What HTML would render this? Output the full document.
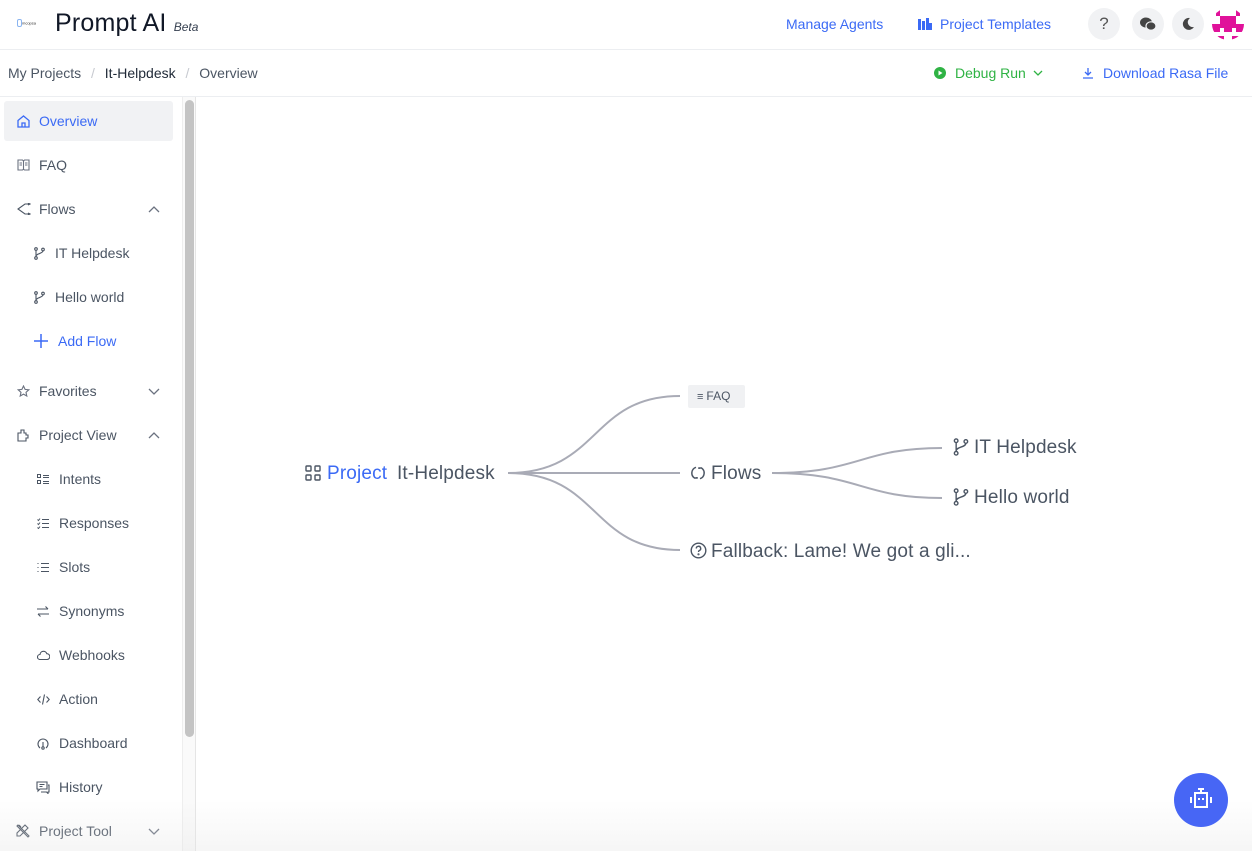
<!DOCTYPE html>
<html><head><meta charset="utf-8"><style>
*{box-sizing:border-box;margin:0;padding:0}
body{width:1252px;height:851px;overflow:hidden;background:#fff;font-family:"Liberation Sans",sans-serif;color:#4b5563;position:relative}
.hdr{position:absolute;left:0;top:0;width:1252px;height:50px;border-bottom:1px solid #eceef1}
.bc{position:absolute;left:0;top:50px;width:1252px;height:47px;border-bottom:1px solid #eceef1;font-size:14px}
.abs{position:absolute;white-space:nowrap}
.side{position:absolute;left:0;top:97px;width:182px;height:754px;font-size:14px}
.it{position:absolute;left:0;height:40px;display:flex;align-items:center;white-space:nowrap}
.it svg{flex:none}
.sb{position:absolute;left:182px;top:97px;width:14px;height:754px;border-left:1px solid #eee;border-right:1px solid #e5e5e5;background:#fafafa}
.thumb{position:absolute;left:185px;top:100px;width:9px;height:637px;background:#c4c4c4;border-radius:5px}
.circ{position:absolute;top:8px;width:32px;height:32px;border-radius:50%;background:#f1f2f4;display:flex;align-items:center;justify-content:center}
.fade{position:absolute;left:0;top:800px;width:1252px;height:51px;background:linear-gradient(rgba(255,255,255,0),rgba(228,228,228,.35))}
.mm{font-size:19px;letter-spacing:0.15px}
</style></head><body>
<div class="hdr">
 <div class="abs" style="left:17px;top:19px;width:22px;height:8px;font-size:5px;color:#4a7fe0"><span style="display:inline-block;width:5px;height:8px;border:1.5px solid #8ab4f0;border-radius:2px;vertical-align:middle"></span><span style="color:#333;font-size:4px">mcopsa</span></div>
 <div class="abs" style="left:55px;top:9px;font-size:25px;color:#111827;letter-spacing:0.2px">Prompt AI <i style="font-size:12px;color:#374151;letter-spacing:0">Beta</i></div>
 <div class="abs" style="left:786px;top:16px;font-size:14px;color:#3b6af5">Manage Agents</div>
 <svg class="abs" style="left:918px;top:17px" width="14" height="14" viewBox="0 0 14 14" fill="#3b6af5"><rect x="0" y="2" width="3" height="11"/><rect x="4" y="4" width="3" height="9"/><rect x="8" y="1" width="3" height="12"/><rect x="11" y="6" width="3" height="7"/></svg>
 <div class="abs" style="left:940px;top:16px;font-size:14px;color:#3b6af5">Project Templates</div>
 <div class="circ" style="left:1088px;font-size:17px;color:#555">?</div>
 <div class="circ" style="left:1132px"><svg width="16" height="14" viewBox="0 0 16 14" fill="#444"><ellipse cx="6" cy="5.5" rx="6" ry="5"/><ellipse cx="11" cy="9" rx="5" ry="4.2" stroke="#f1f2f4" stroke-width="1.2"/></svg></div>
 <div class="circ" style="left:1172px"><svg width="14" height="14" viewBox="0 0 14 14"><path d="M9 1a6 6 0 1 0 4 9a5 5 0 0 1-4-9z" fill="#444"/></svg></div>
 <svg class="abs" style="left:1212px;top:8px" width="32" height="32" viewBox="0 0 8 8"><clipPath id="c"><circle cx="4" cy="4" r="4"/></clipPath><g clip-path="url(#c)" fill="#e0129a"><rect x="0" y="0" width="8" height="8" fill="#fff"/><rect x="1" y="0" width="1" height="2"/><rect x="6" y="0" width="1" height="2"/><rect x="2" y="2" width="4" height="3"/><rect x="0" y="4" width="2" height="2"/><rect x="6" y="4" width="2" height="2"/><rect x="3" y="5" width="2" height="1"/><rect x="1" y="7" width="2" height="1"/><rect x="5" y="7" width="2" height="1"/></g></svg>
</div>
<div class="bc">
 <div class="abs" style="left:8px;top:15px;color:#4b5563">My Projects <span style="color:#c7cad0;margin:0 6px">/</span> <span style="color:#1f2937">It-Helpdesk</span> <span style="color:#c7cad0;margin:0 6px">/</span> Overview</div>
 <svg class="abs" style="left:934px;top:17px" width="12" height="12" viewBox="0 0 12 12"><circle cx="6" cy="6" r="6" fill="#2fb344"/><path d="M4.5 3.5v5l4-2.5z" fill="#fff"/></svg>
 <div class="abs" style="left:955px;top:15px;color:#2fb344">Debug Run</div>
 <svg class="abs" style="left:1033px;top:20px" width="10" height="6" viewBox="0 0 10 6"><path d="M1 1l4 4 4-4" stroke="#2fb344" stroke-width="1.3" fill="none"/></svg>
 <svg class="abs" style="left:1082px;top:17px" width="12" height="12" viewBox="0 0 12 12" stroke="#3b6af5" stroke-width="1.3" fill="none"><path d="M6 1v7M3 5l3 3 3-3M1 11h10"/></svg>
 <div class="abs" style="left:1103px;top:15px;color:#3b6af5">Download Rasa File</div>
</div>
<div class="side">
 <div class="abs" style="left:4px;top:4px;width:169px;height:40px;background:#f1f2f4;border-radius:3px"></div>
 <div class="it" style="top:4px;left:17px;color:#3b6af5"><svg width="13" height="13" viewBox="0 0 13 13" fill="none" stroke="#3b6af5" stroke-width="1.3"><path d="M1 5.5L6.5 1 12 5.5V12H1z M5 12V8h3v4"/></svg><span style="margin-left:9px">Overview</span></div>
 <div class="it" style="top:48px;left:17px"><svg width="13" height="12" viewBox="0 0 13 12" fill="none" stroke="#6b7280" stroke-width="1.1"><path d="M1 1h4.5l1 1 1-1H12v10H7.5l-1-.8-1 .8H1zM6.5 2v9M2.5 4h2.5M2.5 6h2.5M8 4h2.5M8 6h2.5"/></svg><span style="margin-left:9px">FAQ</span></div>
 <div class="it" style="top:92px;left:17px;width:143px"><svg width="14" height="12" viewBox="0 0 14 12" fill="none" stroke="#4b5563" stroke-width="1.1"><path d="M13 1H8L1 6l7 5h5M11 0l2 1-2 1M11 10l2 1-2 1"/></svg><span style="margin-left:8px">Flows</span><svg style="margin-left:auto" width="12" height="7" viewBox="0 0 12 7"><path d="M1 6l5-5 5 5" stroke="#6b7280" stroke-width="1.3" fill="none"/></svg></div>
 <div class="it" style="top:136px;left:34px"><svg width="11" height="13" viewBox="0 0 11 13" fill="none" stroke="#4b5563" stroke-width="1.1"><circle cx="2" cy="2" r="1.3"/><circle cx="2" cy="11" r="1.3"/><circle cx="9" cy="2.5" r="1.3"/><path d="M2 3.3v6.4M9 3.8c0 3-7 2.5-7 5.5"/></svg><span style="margin-left:10px">IT Helpdesk</span></div>
 <div class="it" style="top:180px;left:34px"><svg width="11" height="13" viewBox="0 0 11 13" fill="none" stroke="#4b5563" stroke-width="1.1"><circle cx="2" cy="2" r="1.3"/><circle cx="2" cy="11" r="1.3"/><circle cx="9" cy="2.5" r="1.3"/><path d="M2 3.3v6.4M9 3.8c0 3-7 2.5-7 5.5"/></svg><span style="margin-left:10px">Hello world</span></div>
 <div class="it" style="top:224px;left:34px;color:#3b6af5"><svg width="14" height="14" viewBox="0 0 14 14" stroke="#3b6af5" stroke-width="1.5"><path d="M7 0v14M0 7h14"/></svg><span style="margin-left:10px">Add Flow</span></div>
 <div class="it" style="top:274px;left:17px;width:143px"><svg width="13" height="13" viewBox="0 0 13 13" fill="none" stroke="#6b7280" stroke-width="1.1"><path d="M6.5 1l1.6 3.4 3.7.4-2.8 2.5.8 3.7-3.3-1.9-3.3 1.9.8-3.7L1.2 4.8l3.7-.4z"/></svg><span style="margin-left:9px">Favorites</span><svg style="margin-left:auto" width="12" height="7" viewBox="0 0 12 7"><path d="M1 1l5 5 5-5" stroke="#6b7280" stroke-width="1.3" fill="none"/></svg></div>
 <div class="it" style="top:318px;left:17px;width:143px"><svg width="13" height="13" viewBox="0 0 13 13" fill="none" stroke="#4b5563" stroke-width="1.1"><path d="M1 4h3V1h3v3h2v2h2v3H9v3H1z"/></svg><span style="margin-left:9px">Project View</span><svg style="margin-left:auto" width="12" height="7" viewBox="0 0 12 7"><path d="M1 6l5-5 5 5" stroke="#6b7280" stroke-width="1.3" fill="none"/></svg></div>
 <div class="it" style="top:362px;left:37px"><svg width="12" height="11" viewBox="0 0 12 11" fill="none" stroke="#4b5563" stroke-width="1"><rect x=".5" y=".5" width="3" height="3"/><rect x=".5" y="6.5" width="3" height="3"/><path d="M6 1.5h6M6 3.5h6M6 7.5h6M6 9.5h6"/></svg><span style="margin-left:10px">Intents</span></div>
 <div class="it" style="top:406px;left:37px"><svg width="12" height="11" viewBox="0 0 12 11" fill="none" stroke="#4b5563" stroke-width="1"><path d="M.5 1.5l1 1 1.5-2M.5 5.5l1 1 1.5-2M.5 9.5l1 1 1.5-2M5 1.5h7M5 5.5h7M5 9.5h7"/></svg><span style="margin-left:10px">Responses</span></div>
 <div class="it" style="top:450px;left:37px"><svg width="12" height="11" viewBox="0 0 12 11" fill="none" stroke="#4b5563" stroke-width="1.1"><path d="M.5 1.5h1M.5 5.5h1M.5 9.5h1M4 1.5h8M4 5.5h8M4 9.5h8"/></svg><span style="margin-left:10px">Slots</span></div>
 <div class="it" style="top:494px;left:37px"><svg width="12" height="11" viewBox="0 0 12 11" fill="none" stroke="#4b5563" stroke-width="1.1"><path d="M0 3h11M8.5 .5L11 3M12 8H1M3.5 10.5L1 8"/></svg><span style="margin-left:10px">Synonyms</span></div>
 <div class="it" style="top:538px;left:37px"><svg width="13" height="10" viewBox="0 0 13 10" fill="none" stroke="#4b5563" stroke-width="1.1"><path d="M3 9.5a2.5 2.5 0 0 1 0-5 3.5 3.5 0 0 1 6.8-.8A2.8 2.8 0 0 1 10 9.5z"/></svg><span style="margin-left:9px">Webhooks</span></div>
 <div class="it" style="top:582px;left:37px"><svg width="13" height="11" viewBox="0 0 13 11" fill="none" stroke="#4b5563" stroke-width="1.1"><path d="M3.5 2.5L.8 5.5l2.7 3M9.5 2.5l2.7 3-2.7 3M7.5 .5l-2 10"/></svg><span style="margin-left:9px">Action</span></div>
 <div class="it" style="top:626px;left:37px"><svg width="12" height="13" viewBox="0 0 12 13" fill="none" stroke="#4b5563" stroke-width="1.1"><path d="M3 11a5 5 0 1 1 6 0M6 5v5"/><circle cx="6" cy="11" r="1.2"/></svg><span style="margin-left:10px">Dashboard</span></div>
 <div class="it" style="top:670px;left:36px"><svg width="14" height="13" viewBox="0 0 14 13" fill="none" stroke="#4b5563" stroke-width="1.1"><path d="M1 1h10v7H4l-2 2V8H1zM3.5 3.5h5M3.5 5.5h3M12 4h1v7h-1v1.5L10.5 11H5"/></svg><span style="margin-left:9px">History</span></div>
 <div class="it" style="top:714px;left:16px;width:144px"><svg width="15" height="14" viewBox="0 0 15 14" fill="none" stroke="#4b5563" stroke-width="1.1"><path d="M1 2l1-1 11 11-1 1zM9 1l3 3-8 8H1v-3zM3 1l2 2M10 9l2 2"/></svg><span style="margin-left:8px">Project Tool</span><svg style="margin-left:auto" width="12" height="7" viewBox="0 0 12 7"><path d="M1 1l5 5 5-5" stroke="#6b7280" stroke-width="1.3" fill="none"/></svg></div>
</div>
<div class="sb"></div><div class="thumb"></div>
<svg class="abs" style="left:0;top:0" width="1252" height="851" fill="none" stroke="#a9abb6" stroke-width="2">
 <path d="M508 473C600 473 590 396 680 396"/>
 <path d="M508 473H680"/>
 <path d="M508 473C600 473 590 550 680 550"/>
 <path d="M772 473C860 473 860 448 942 448"/>
 <path d="M772 473C860 473 860 498 942 498"/>
</svg>
<svg class="abs" style="left:305px;top:465px" width="16" height="16" viewBox="0 0 16 16" fill="none" stroke="#4b5563" stroke-width="1.4"><rect x="1" y="1" width="5" height="5" rx=".8"/><rect x="10" y="1" width="5" height="5" rx=".8"/><rect x="1" y="10" width="5" height="5" rx=".8"/><rect x="10" y="10" width="5" height="5" rx=".8"/></svg>
<div class="abs mm" style="left:327px;top:463px;color:#3b6af5">Project</div>
<div class="abs mm" style="left:397px;top:463px;color:#4b5563">It-Helpdesk</div>
<div class="abs" style="left:688px;top:385px;width:57px;height:23px;background:#f0f1f3;border-radius:2px;font-size:12px;color:#4b5563;padding:4px 0 0 9px"><span style="font-size:11px;margin-right:3px">≡</span>FAQ</div>
<svg class="abs" style="left:690px;top:465px" width="16" height="16" viewBox="0 0 16 16" fill="none" stroke="#4b5563" stroke-width="1.5"><path d="M6 2.3A6 6 0 0 0 4.5 13M10 13.7A6 6 0 0 0 11.5 3M4 13h3v-1M12 3H9v1"/></svg>
<div class="abs mm" style="left:711px;top:463px;color:#4b5563">Flows</div>
<svg class="abs" style="left:690px;top:542px" width="17" height="17" viewBox="0 0 17 17" fill="none" stroke="#4b5563" stroke-width="1.4"><circle cx="8.5" cy="8.5" r="7.3"/><path d="M6.3 6.5a2.2 2.2 0 1 1 3 2c-.6.3-.8.7-.8 1.5"/><circle cx="8.5" cy="12.3" r=".4" fill="#4b5563"/></svg>
<div class="abs mm" style="left:711px;top:541px;color:#4b5563">Fallback: Lame! We got a gli...</div>
<svg class="abs" style="left:953px;top:438px" width="16" height="18" viewBox="0 0 11 13" fill="none" stroke="#4b5563" stroke-width="1"><circle cx="2" cy="2" r="1.3"/><circle cx="2" cy="11" r="1.3"/><circle cx="9" cy="2.5" r="1.3"/><path d="M2 3.3v6.4M9 3.8c0 3-7 2.5-7 5.5"/></svg>
<div class="abs mm" style="left:974px;top:437px;color:#4b5563">IT Helpdesk</div>
<svg class="abs" style="left:953px;top:488px" width="16" height="18" viewBox="0 0 11 13" fill="none" stroke="#4b5563" stroke-width="1"><circle cx="2" cy="2" r="1.3"/><circle cx="2" cy="11" r="1.3"/><circle cx="9" cy="2.5" r="1.3"/><path d="M2 3.3v6.4M9 3.8c0 3-7 2.5-7 5.5"/></svg>
<div class="abs mm" style="left:974px;top:487px;color:#4b5563">Hello world</div>
<div class="fade"></div>
<div class="abs" style="left:1174px;top:773px;width:54px;height:54px;border-radius:50%;background:#4766f5"></div>
<svg class="abs" style="left:1184px;top:783px" width="34" height="34" viewBox="0 0 34 34" fill="none" stroke="#fff" stroke-width="2"><path d="M14 6h6M17 6v4"/><rect x="11" y="10" width="12" height="14"/><path d="M7 14v6M27 14v6"/><rect x="14" y="15" width="2" height="2" fill="#fff" stroke="none"/><rect x="18" y="15" width="2" height="2" fill="#fff" stroke="none"/></svg>
</body></html>
